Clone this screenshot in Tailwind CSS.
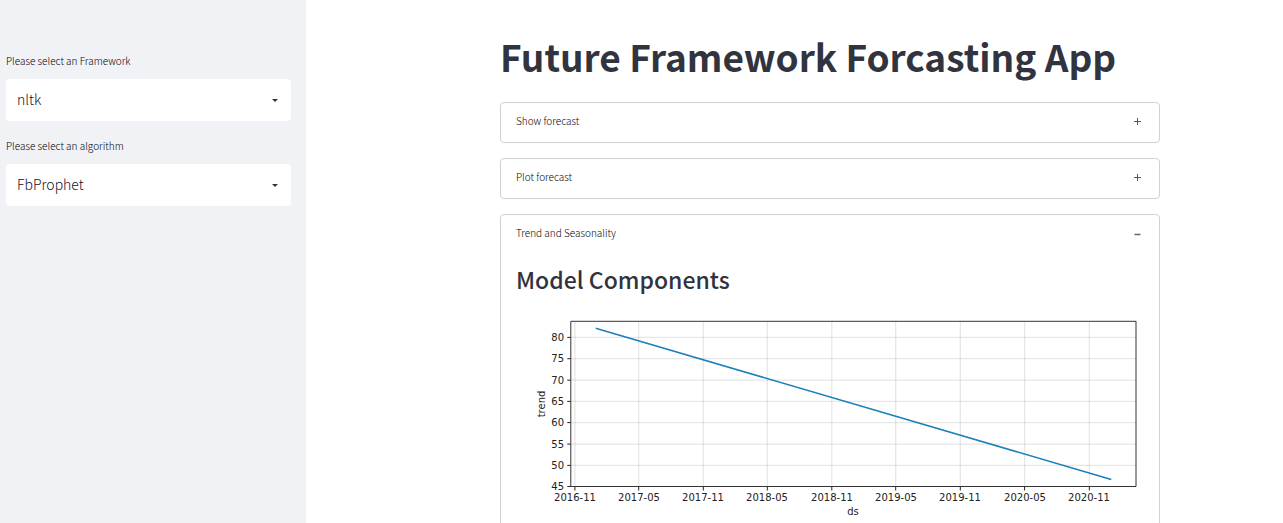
<!DOCTYPE html>
<html lang="en">
<head>
<meta charset="utf-8">
<meta name="viewport" content="width=device-width, initial-scale=1">
<title>Future Framework Forcasting App</title>
<script src="https://cdn.jsdelivr.net/npm/@tailwindcss/browser@4"></script>
</head>
<body class="flex h-screen overflow-hidden bg-white font-['Noto_Sans_CJK_JP','Open_Sans',sans-serif] text-[#31333f]">
<aside class="flex w-[306px] shrink-0 flex-col gap-[17px] bg-[#f0f2f6] pt-[53px] pr-[15px] pl-[6px]">
  <div>
    <label for="framework" class="block h-[26px] text-[10px] leading-4 font-light text-[#04050c]">Please select an Framework</label>
    <div class="relative">
      <select id="framework" class="block h-[42px] w-full appearance-none rounded bg-white px-[11px] pb-[2px] text-[14px] leading-5 font-light text-[#12131f]"><option>nltk</option></select>
      <svg class="pointer-events-none absolute top-5 right-[13px] h-[3px] w-[6px]" viewBox="0 0 6 3" fill="#31333f"><path d="M0 0h6L3 3z"/></svg>
    </div>
  </div>
  <div>
    <label for="algorithm" class="block h-[26px] text-[10px] leading-4 font-light text-[#04050c]">Please select an algorithm</label>
    <div class="relative">
      <select id="algorithm" class="block h-[42px] w-full appearance-none rounded bg-white px-[11px] pb-[2px] text-[14px] leading-5 font-light text-[#12131f]"><option>FbProphet</option></select>
      <svg class="pointer-events-none absolute top-5 right-[13px] h-[3px] w-[6px]" viewBox="0 0 6 3" fill="#31333f"><path d="M0 0h6L3 3z"/></svg>
    </div>
  </div>
</aside>
<main class="flex min-w-0 flex-1 justify-center pt-[30px] pl-[71px]">
  <div class="flex w-full max-w-[660px] flex-col">
    <h1 class="mb-5 text-[37px] leading-[52px] font-bold whitespace-nowrap">Future Framework Forcasting App</h1>
    <div class="flex flex-col gap-[15px]">
      <details class="rounded border border-[#d1d1d3]">
        <summary class="flex h-[39px] cursor-pointer list-none items-center justify-between pr-[18px] pb-[3px] pl-[15px] text-[10px] leading-4 font-light text-[#04050c]">Show forecast
          <svg class="mt-px h-[7px] w-[7px]" viewBox="0 0 7 7" stroke="#31333f" stroke-opacity=".8"><path d="M0 3.5h7M3.5 0v7"/></svg>
        </summary>
      </details>
      <details class="rounded border border-[#d1d1d3]">
        <summary class="flex h-[39px] cursor-pointer list-none items-center justify-between pr-[18px] pb-[3px] pl-[15px] text-[10px] leading-4 font-light text-[#04050c]">Plot forecast
          <svg class="mt-px h-[7px] w-[7px]" viewBox="0 0 7 7" stroke="#31333f" stroke-opacity=".8"><path d="M0 3.5h7M3.5 0v7"/></svg>
        </summary>
      </details>
      <details open class="rounded border border-[#d1d1d3]">
        <summary class="flex h-[39px] cursor-pointer list-none items-center justify-between pr-[18px] pb-[3px] pl-[15px] text-[10px] leading-4 font-light text-[#04050c]">Trend and Seasonality
          <svg class="mt-px h-[7px] w-[7px]" viewBox="0 0 7 7" stroke="#31333f"><path d="M.5 4.5h6" stroke-width="1.5" stroke-opacity=".75"/></svg>
        </summary>
        <div class="px-[15px] pt-[7px]">
          <h2 class="mb-[13px] text-[23px] leading-9 font-medium">Model Components</h2>
          <svg class="block w-full font-['DejaVu_Sans',sans-serif] text-[10px]" viewBox="516 310 628 300" fill="#222" role="img" aria-label="Trend by ds">
            <g stroke="#808080" stroke-opacity=".2" stroke-width="1.2">
              <path d="M574.9 321v165M638.7 321v165M703.3 321v165M767.3 321v165M831.8 321v165M895.7 321v165M960.3 321v165M1024.6 321v165M1089.3 321v165"/>
              <path d="M571 337.4h565M571 358.7h565M571 380.2h565M571 401.4h565M571 422.6h565M571 444.1h565M571 465.4h565"/>
            </g>
            <path d="M596.5 328.5L1110.5 479.2" fill="none" stroke="#0072b2" stroke-opacity=".9" stroke-width="1.6" stroke-linecap="square"/>
            <path d="M574.9 487v3.5M638.7 487v3.5M703.3 487v3.5M767.3 487v3.5M831.8 487v3.5M895.7 487v3.5M960.3 487v3.5M1024.6 487v3.5M1089.3 487v3.5M567.3 337.4h3.5M567.3 358.7h3.5M567.3 380.2h3.5M567.3 401.4h3.5M567.3 422.6h3.5M567.3 444.1h3.5M567.3 465.4h3.5M567.3 486.5h3.5" stroke="#222"/>
            <path d="M570.8 321.3H1136V486.5H570.8z" fill="none" stroke="#333"/>
            <g text-anchor="end">
              <text x="564" y="341">80</text><text x="564" y="362">75</text><text x="564" y="384">70</text><text x="564" y="405">65</text><text x="564" y="426">60</text><text x="564" y="448">55</text><text x="564" y="469">50</text><text x="564" y="490">45</text>
            </g>
            <g text-anchor="middle">
              <text x="575" y="501">2016-11</text><text x="639" y="501">2017-05</text><text x="703" y="501">2017-11</text><text x="767" y="501">2018-05</text><text x="832" y="501">2018-11</text><text x="896" y="501">2019-05</text><text x="960" y="501">2019-11</text><text x="1025" y="501">2020-05</text><text x="1089" y="501">2020-11</text>
              <text x="853" y="515">ds</text>
              <text transform="translate(545 404) rotate(-90)">trend</text>
            </g>
          </svg>
        </div>
      </details>
    </div>
  </div>
</main>
</body>
</html>
